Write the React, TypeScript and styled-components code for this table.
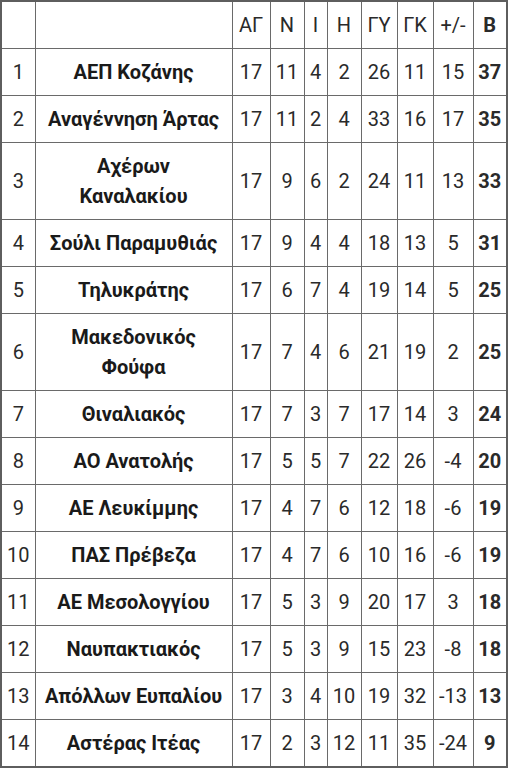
import styled, { createGlobalStyle } from 'styled-components';

interface Row {
  pos: number;
  team: string;
  stats: number[];
  points: number;
}

const rows: Row[] = [
  { pos: 1, team: 'ΑΕΠ Κοζάνης', stats: [17, 11, 4, 2, 26, 11, 15], points: 37 },
  { pos: 2, team: 'Αναγέννηση Άρτας', stats: [17, 11, 2, 4, 33, 16, 17], points: 35 },
  { pos: 3, team: 'Αχέρων\nΚαναλακίου', stats: [17, 9, 6, 2, 24, 11, 13], points: 33 },
  { pos: 4, team: 'Σούλι Παραμυθιάς', stats: [17, 9, 4, 4, 18, 13, 5], points: 31 },
  { pos: 5, team: 'Τηλυκράτης', stats: [17, 6, 7, 4, 19, 14, 5], points: 25 },
  { pos: 6, team: 'Μακεδονικός\nΦούφα', stats: [17, 7, 4, 6, 21, 19, 2], points: 25 },
  { pos: 7, team: 'Θιναλιακός', stats: [17, 7, 3, 7, 17, 14, 3], points: 24 },
  { pos: 8, team: 'ΑΟ Ανατολής', stats: [17, 5, 5, 7, 22, 26, -4], points: 20 },
  { pos: 9, team: 'ΑΕ Λευκίμμης', stats: [17, 4, 7, 6, 12, 18, -6], points: 19 },
  { pos: 10, team: 'ΠΑΣ Πρέβεζα', stats: [17, 4, 7, 6, 10, 16, -6], points: 19 },
  { pos: 11, team: 'ΑΕ Μεσολογγίου', stats: [17, 5, 3, 9, 20, 17, 3], points: 18 },
  { pos: 12, team: 'Ναυπακτιακός', stats: [17, 5, 3, 9, 15, 23, -8], points: 18 },
  { pos: 13, team: 'Απόλλων Ευπαλίου', stats: [17, 3, 4, 10, 19, 32, -13], points: 13 },
  { pos: 14, team: 'Αστέρας Ιτέας', stats: [17, 2, 3, 12, 11, 35, -24], points: 9 },
];

const headers = ['ΑΓ', 'Ν', 'Ι', 'Η', 'ΓΥ', 'ΓΚ', '+/-'];
const widths = [34, 197, 38, 34, 23, 34, 36, 36, 40, 34];

const GlobalStyle = createGlobalStyle`
  body {
    margin: 0;
    background: #fff;
    font-family: Roboto, "Noto Sans", sans-serif;
  }
`;

const App = () => {
  return (
    <>
      <GlobalStyle />
      <Table>
        <colgroup>
          {widths.map((w, i) => (
            <col key={i} style={{ width: w }} />
          ))}
        </colgroup>
        <thead>
          <tr>
            <Cell />
            <Cell />
            {headers.map((h) => (
              <Cell key={h}>{h}</Cell>
            ))}
            <Cell $bold>Β</Cell>
          </tr>
        </thead>
        <tbody>
          {rows.map((r) => (
            <tr key={r.pos}>
              <Cell>{r.pos}</Cell>
              <TeamCell>{r.team}</TeamCell>
              {r.stats.map((s, i) => (
                <Cell key={i}>{s}</Cell>
              ))}
              <Cell $bold>{r.points}</Cell>
            </tr>
          ))}
        </tbody>
      </Table>
    </>
  );
};

export default App;

const Table = styled.table`
  width: 507px;
  table-layout: fixed;
  border-collapse: collapse;
  border: 2px solid #5e5e5e;
  color: #2a2a2a;
  font-size: 20px;
`;

const Cell = styled.td<{ $bold?: boolean }>`
  border: 1px solid #6a6a6a;
  padding: 8px 0;
  line-height: 30px;
  text-align: center;
  vertical-align: middle;
  font-weight: ${(p) => (p.$bold ? 700 : 400)};
  white-space: nowrap;
`;

const TeamCell = styled(Cell)`
  font-weight: 700;
  white-space: pre-line;
  color: #1a1a1a;
`;
